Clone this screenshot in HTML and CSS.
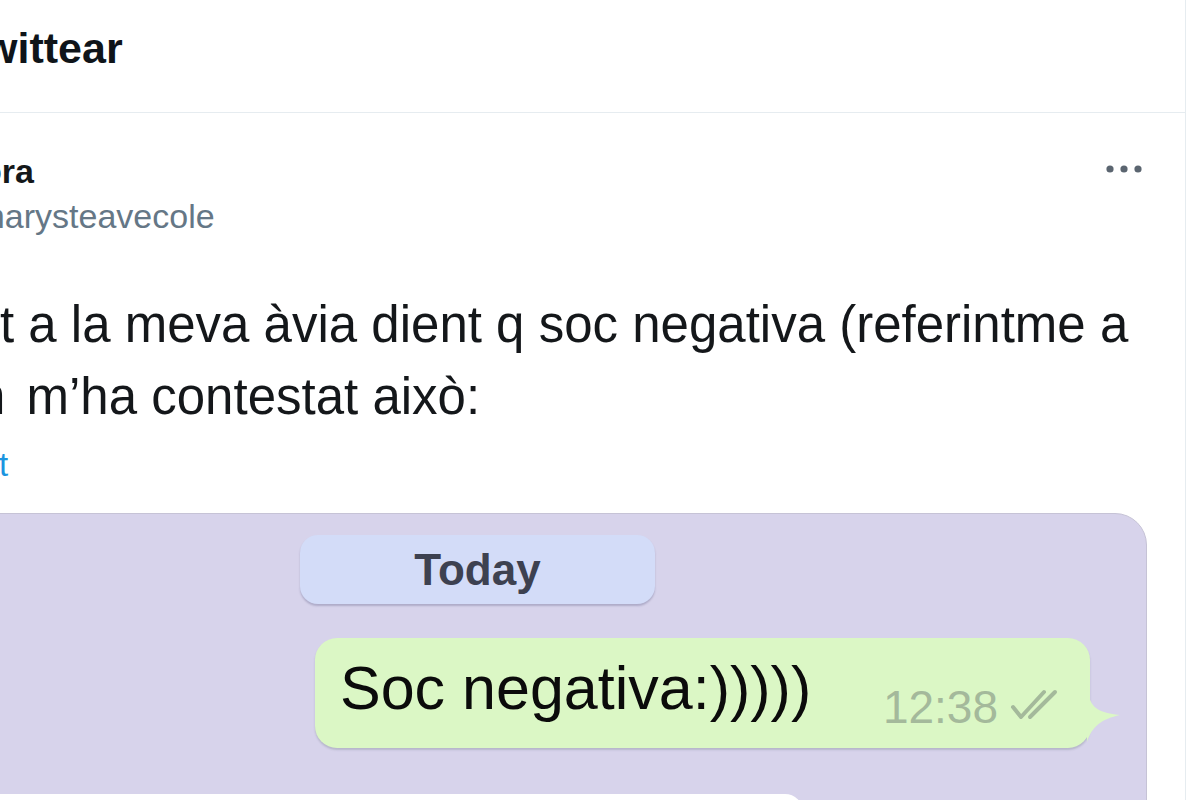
FILE: index.html
```html
<!DOCTYPE html>
<html lang="ca">
<head>
<meta charset="utf-8">
<title>Twittear</title>
<link rel="stylesheet" href="styles.css">
</head>
<body>
<div class="page">
  <main class="column">
    <header class="topbar">
      <h1 class="title">Twittear</h1>
    </header>
    <article class="tweet">
      <div class="author">
        <div class="names">
          <div class="name">ora</div>
          <div class="handle">@marysteavecole</div>
        </div>
        <svg class="more" width="36" height="10" viewBox="0 0 36 10" aria-label="Més">
          <circle cx="4" cy="5" r="3.6" fill="#5b6570"/>
          <circle cx="18" cy="5" r="3.6" fill="#5b6570"/>
          <circle cx="32" cy="5" r="3.6" fill="#5b6570"/>
        </svg>
      </div>
      <div class="text">
        <div class="line">t a la meva àvia dient q soc negativa (referintme a</div>
        <div class="line"><span class="frag">n</span> m’ha contestat això:</div>
      </div>
      <div class="translate">t</div>
      <div class="media">
        <div class="pill">Today</div>
        <div class="bubble">
          <span class="msg">Soc negativa:)))))</span>
          <span class="meta">
            <span class="time">12:38</span>
            <svg class="ticks" width="50" height="32" viewBox="0 0 50 32">
              <path d="M3 18 L11 28 L34 3" fill="none" stroke="#a4b99b" stroke-width="4" stroke-linecap="round" stroke-linejoin="round"/>
              <path d="M20 28 L45 3" fill="none" stroke="#a4b99b" stroke-width="4" stroke-linecap="round"/>
            </svg>
          </span>
          <svg class="tail" width="34" height="66" viewBox="0 0 34 66">
            <path d="M0 0 C2 22 7 28 33 31 C15 35 5 42 0 58 Z" fill="#dbf7c5"/>
          </svg>
        </div>
        <div class="incoming"></div>
      </div>
    </article>
  </main>
  <aside class="side"></aside>
</div>
</body>
</html>
```
FILE: styles.css
```css
* {
  box-sizing: border-box;
  margin: 0;
  padding: 0;
}

html, body {
  background: #ffffff;
}

body {
  font-family: "Liberation Sans", Arial, sans-serif;
  color: #14171a;
  height: 800px;
  overflow: hidden;
}

.page {
  display: flex;
  height: 800px;
}

.column {
  width: 1186px;
  flex: none;
  border-right: 1px solid #e6ecf0;
  overflow: hidden;
}

.side {
  flex: 1;
}

.topbar {
  height: 113px;
  border-bottom: 1px solid #e6ecf0;
  padding-top: 27px;
}

.title {
  font-size: 43px;
  line-height: 42px;
  font-weight: 700;
  color: #0f1419;
  margin-left: -39px;
  white-space: nowrap;
}

.tweet {
  padding: 38px 38px 0 0;
}

.author {
  display: flex;
  justify-content: space-between;
  align-items: flex-start;
}

.name {
  font-size: 34px;
  line-height: 40px;
  font-weight: 700;
  color: #14171a;
  margin-left: -19px;
  white-space: nowrap;
}

.handle {
  font-size: 34px;
  line-height: 40px;
  color: #657786;
  margin-top: 5px;
  margin-left: -58px;
  white-space: nowrap;
}

.more {
  margin-top: 13px;
  margin-right: 5px;
}

.text {
  margin-top: 53px;
  font-size: 51px;
  line-height: 72px;
  color: #14171a;
}

.line {
  white-space: nowrap;
}

.frag {
  margin-left: -23px;
  margin-right: 7px;
}

.translate {
  margin-top: 12px;
  font-size: 33px;
  line-height: 40px;
  color: #1b95e0;
  margin-left: -1px;
}

.media {
  margin-top: 28px;
  margin-left: -40px;
  height: 320px;
  background: #d7d3eb;
  border: 1px solid #c6c3d6;
  border-radius: 0 32px 0 0;
  padding-top: 21px;
  display: flex;
  flex-direction: column;
  align-items: flex-start;
}

.pill {
  margin-left: 339px;
  width: 355px;
  height: 72px;
  border-radius: 18px;
  background: #d3dcf8;
  box-shadow: 0 2px 2px rgba(70, 70, 110, 0.28);
  display: flex;
  align-items: center;
  justify-content: center;
  font-size: 44px;
  font-weight: 700;
  color: #3d4150;
}

.bubble {
  position: relative;
  margin-top: 34px;
  margin-left: 354px;
  width: 775px;
  height: 113px;
  border-radius: 22px;
  background: #dbf7c5;
  box-shadow: 0 2px 2px rgba(70, 80, 90, 0.22);
  display: flex;
  align-items: flex-end;
  padding: 15px 30px 15px 25px;
}

.msg {
  align-self: flex-start;
  font-size: 61px;
  line-height: 70px;
  color: #0b0b0b;
  white-space: nowrap;
}

.meta {
  margin-left: auto;
  display: flex;
  align-items: flex-end;
  gap: 12px;
}

.time {
  font-size: 46px;
  line-height: 52px;
  color: #a4b99b;
}

.ticks {
  margin-bottom: 12px;
}

.tail {
  position: absolute;
  right: -31px;
  top: 46px;
}

.incoming {
  margin-top: 46px;
  width: 842px;
  height: 40px;
  border-radius: 18px;
  background: #ffffff;
}
```
